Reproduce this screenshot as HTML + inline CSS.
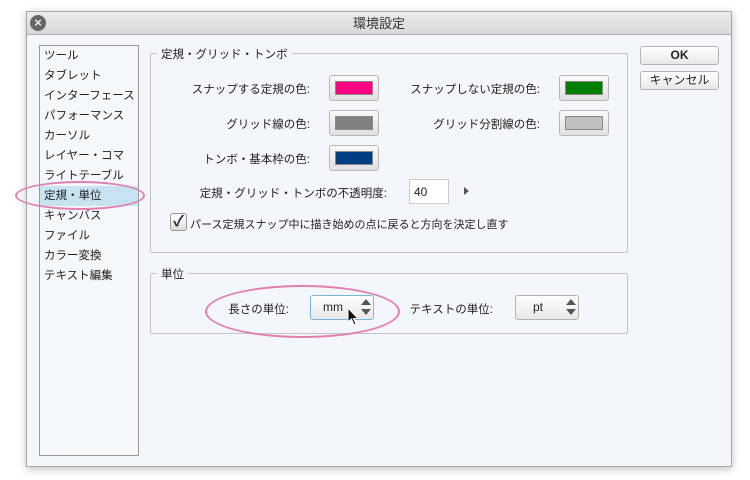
<!DOCTYPE html>
<html><head><meta charset="utf-8"><style>
*{margin:0;padding:0;box-sizing:border-box}
body{width:750px;height:480px;background:#fff;font-family:"Liberation Sans","Noto Sans CJK JP",sans-serif;font-size:11px;color:#222;position:relative;overflow:hidden}
.win{position:absolute;left:26px;top:11px;width:706px;height:456px;background:#f3f6fa;border:1px solid #a8a8a8;box-shadow:0 2px 8px rgba(0,0,0,.25)}
.tb{position:absolute;left:0;top:0;right:0;height:23px;background:linear-gradient(#ececec,#d8d8d8);border-bottom:1px solid #b0b0b0;text-align:center;font-size:13px;line-height:23px;color:#333}
.close{position:absolute;left:3px;top:3px;width:16px;height:16px;border-radius:50%;background:#666;color:#eee;font-size:13px;line-height:16px;text-align:center;font-weight:bold}
.abs{position:absolute}
.list{left:12px;top:33px;width:100px;height:411px;background:#f5f8fb;border:1px solid #999}
.list div{height:20px;line-height:20px;padding-left:4px;font-size:11.5px}
.sel{background:#c8e2f2}
.grp{border:1px solid #c4c4c4;border-radius:2px}
.gt{position:absolute;background:#f3f6fa;padding:0 4px;font-size:11.5px}
.lbl{position:absolute;text-align:right;font-size:11.5px}
.sw{position:absolute;width:50px;height:26px;border:1px solid #b8b8b8;border-radius:3px;background:linear-gradient(#fafafa,#e0e0e0)}
.sw i{position:absolute;left:5px;top:5px;right:5px;bottom:5px;border:1px solid #888}
.btn{position:absolute;border:1px solid #b4b4b4;border-radius:3px;background:linear-gradient(#fff,#e8e8e8);text-align:center;font-size:12px}
.ell{position:absolute;border:2px solid #e27fb0;border-radius:50%}
</style></head><body>
<div class="win">
<div class="tb"><div class="close">×</div>環境設定</div>
<div class="abs list">
<div>ツール</div><div>タブレット</div><div>インターフェース</div><div>パフォーマンス</div><div>カーソル</div><div>レイヤー・コマ</div><div>ライトテーブル</div><div class="sel">定規・単位</div><div>キャンバス</div><div>ファイル</div><div>カラー変換</div><div>テキスト編集</div>
</div>
<div class="abs grp" style="left:123px;top:41px;width:478px;height:200px"></div>
<div class="gt" style="left:130px;top:34px">定規・グリッド・トンボ</div>
<div class="lbl" style="left:118px;top:69px;width:165px">スナップする定規の色:</div>
<div class="sw" style="left:302px;top:63px"><i style="background:#ff0080"></i></div>
<div class="lbl" style="left:358px;top:69px;width:155px">スナップしない定規の色:</div>
<div class="sw" style="left:532px;top:63px"><i style="background:#008000"></i></div>
<div class="lbl" style="left:118px;top:104px;width:165px">グリッド線の色:</div>
<div class="sw" style="left:302px;top:98px"><i style="background:#808080"></i></div>
<div class="lbl" style="left:358px;top:104px;width:155px">グリッド分割線の色:</div>
<div class="sw" style="left:532px;top:98px"><i style="background:#c0c0c0"></i></div>
<div class="lbl" style="left:118px;top:139px;width:165px">トンボ・基本枠の色:</div>
<div class="sw" style="left:302px;top:133px"><i style="background:#003c80"></i></div>
<div class="lbl" style="left:150px;top:173px;width:210px">定規・グリッド・トンボの不透明度:</div>
<div class="abs" style="left:382px;top:167px;width:40px;height:25px;background:#fff;border:1px solid #ccc;padding:5px 4px;font-size:12px">40</div>
<div class="abs" style="left:437px;top:175px;width:0;height:0;border-left:5px solid #555;border-top:4px solid transparent;border-bottom:4px solid transparent"></div>
<div class="abs" style="left:143px;top:201px;width:17px;height:18px;border:1px solid #999;border-radius:3px;background:linear-gradient(#fff,#ddd);font-size:15px;line-height:16px;text-align:center;font-weight:bold">✓</div>
<div class="abs" style="left:163px;top:204px;font-size:11px">パース定規スナップ中に描き始めの点に戻ると方向を決定し直す</div>
<div class="abs grp" style="left:123px;top:261px;width:478px;height:61px"></div>
<div class="gt" style="left:130px;top:254px">単位</div>
<div class="lbl" style="left:198px;top:289px;width:64px">長さの単位:</div>
<div class="btn" style="left:283px;top:283px;width:64px;height:25px;border-color:#7ab6dc;line-height:23px;padding-right:18px">mm</div>
<div class="abs" style="left:334px;top:287px;border-bottom:6px solid #555;border-left:5px solid transparent;border-right:5px solid transparent"></div>
<div class="abs" style="left:334px;top:297px;border-top:6px solid #555;border-left:5px solid transparent;border-right:5px solid transparent"></div>
<div class="lbl" style="left:368px;top:289px;width:98px">テキストの単位:</div>
<div class="btn" style="left:488px;top:283px;width:64px;height:25px;line-height:23px;padding-right:18px">pt</div>
<div class="abs" style="left:539px;top:287px;border-bottom:6px solid #555;border-left:5px solid transparent;border-right:5px solid transparent"></div>
<div class="abs" style="left:539px;top:297px;border-top:6px solid #555;border-left:5px solid transparent;border-right:5px solid transparent"></div>
<div class="btn" style="left:613px;top:34px;width:79px;height:19px;line-height:17px;font-weight:bold">OK</div>
<div class="btn" style="left:613px;top:59px;width:79px;height:19px;line-height:17px">キャンセル</div>
<svg class="abs" style="left:320px;top:295px" width="14" height="20"><path d="M1 1 L1 15 L4.5 12 L7 18 L9 17 L6.5 11.5 L11 11.5 Z" fill="#111" stroke="#fff" stroke-width="1"/></svg>
</div>
<div class="ell" style="left:15px;top:181px;width:130px;height:29px"></div>
<div class="ell" style="left:205px;top:285px;width:195px;height:53px"></div>
</body></html>
